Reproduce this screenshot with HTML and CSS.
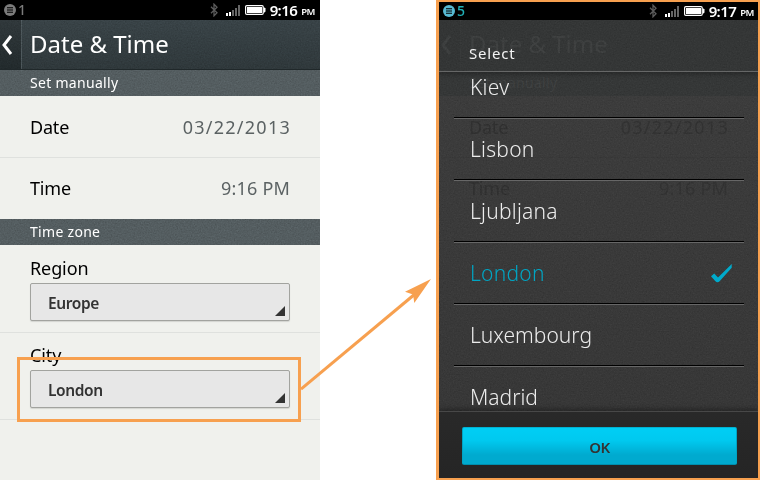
FILE: index.html
```
<!DOCTYPE html>
<html lang="en">
<head>
<meta charset="utf-8">
<title>Date &amp; Time</title>
<link rel="stylesheet" href="styles.css">
</head>
<body>
<svg class="defs" width="0" height="0">
  <defs>
    <filter id="grain" x="0" y="0" width="100%" height="100%" color-interpolation-filters="sRGB">
      <feTurbulence type="fractalNoise" baseFrequency="0.7" numOctaves="2" seed="4"/>
      <feColorMatrix values="0.33 0.33 0.33 0 0  0.33 0.33 0.33 0 0  0.33 0.33 0.33 0 0  0 0 0 0 1"/>
    </filter>
    <symbol id="notice" viewBox="0 0 12 12">
      <circle cx="6" cy="6" r="6" fill="currentColor"/>
      <path d="M3 3.7h6M3 6h6M3 8.3h6" stroke="#000" stroke-width="1.1"/>
    </symbol>
    <symbol id="bluetooth" viewBox="0 0 8 14">
      <path d="M1 3.8 7 9.7 4 12.8V1.2L7 4.3 1 10.2" fill="none" stroke="#5c5c5c" stroke-width="1.3"/>
    </symbol>
    <symbol id="signal" viewBox="0 0 14 11">
      <path d="M0 8h2v3H0zM3 7h2v4H3z" fill="#fff"/>
      <path d="M6 5h2v6H6zM9 3h2v8H9zM12 0h2v11h-2z" fill="#666"/>
    </symbol>
    <symbol id="battery" viewBox="0 0 21 10">
      <rect x=".6" y=".6" width="17.6" height="8.8" rx="1.2" fill="none" stroke="#fff" stroke-width="1.2"/>
      <rect x="2" y="2" width="15" height="6" fill="#fff"/>
      <path d="M18.5 2.5h1l1 1v3l-1 1h-1z" fill="#fff"/>
    </symbol>
  </defs>
</svg>

<main class="stage">
  <section class="phone">
    <header class="status">
      <svg class="notice"><use href="#notice"/></svg><span class="count">1</span>
      <svg class="bt"><use href="#bluetooth"/></svg>
      <svg class="sig"><use href="#signal"/></svg>
      <svg class="bat"><use href="#battery"/></svg>
      <span class="clock">9:16</span><span class="ampm">PM</span>
    </header>
    <div class="titlebar">
      <svg class="grain"><rect width="100%" height="100%" filter="url(#grain)"/></svg>
      <div class="back"><svg width="12" height="20" viewBox="0 0 12 20"><path d="M10 1 3 10l7 9" fill="none" stroke="#fff" stroke-width="3"/></svg></div>
      <h1>Date &amp; Time</h1>
    </div>
    <h2><svg class="grain"><rect width="100%" height="100%" filter="url(#grain)"/></svg><span>Set manually</span></h2>
    <div class="row"><span>Date</span><span class="value date">03/22/2013</span></div>
    <div class="row last"><span>Time</span><span class="value">9:16 PM</span></div>
    <h2 class="zone"><svg class="grain"><rect width="100%" height="100%" filter="url(#grain)"/></svg><span>Time zone</span></h2>
    <div class="field region"><span class="label">Region</span><div class="select">Europe</div></div>
    <div class="field"><span class="label">City</span><div class="select">London</div></div>
  </section>

  <section class="frame">
    <header class="status alt">
      <svg class="notice"><use href="#notice"/></svg><span class="count">5</span>
      <svg class="bt"><use href="#bluetooth"/></svg>
      <svg class="sig"><use href="#signal"/></svg>
      <svg class="bat"><use href="#battery"/></svg>
      <span class="clock">9:17</span><span class="ampm">PM</span>
    </header>
    <div class="dialog">
      <div class="under">
        <div class="titlebar">
          <div class="back"><svg width="12" height="20" viewBox="0 0 12 20"><path d="M10 1 3 10l7 9" fill="none" stroke="currentColor" stroke-width="3"/></svg></div>
          <h1>Date &amp; Time</h1>
        </div>
        <h2><span>Set manually</span></h2>
        <div class="row"><span>Date</span><span class="value date">03/22/2013</span></div>
        <div class="row last"><span>Time</span><span class="value">9:16 PM</span></div>
      </div>
      <svg class="grain"><rect width="100%" height="100%" filter="url(#grain)"/></svg>
      <div class="heading">Select</div>
      <ul class="list">
        <li class="kiev">Kiev</li>
        <li>Lisbon</li>
        <li>Ljubljana</li>
        <li class="on">London<svg width="22" height="20" viewBox="0 0 22 20"><path d="M0 12.2 3.2 9.6 7 13.4 20.7 0v3.8L8.6 17.3Q6.5 19.2 4.4 17.2Z" fill="#00aacb"/></svg></li>
        <li class="lux">Luxembourg</li>
        <li class="lux">Madrid</li>
      </ul>
      <div class="foot"><button>OK</button></div>
    </div>
  </section>

  <div class="callout"></div>
  <svg class="arrow" width="134" height="116" viewBox="0 0 134 116">
    <path d="M1 114.2 115 19" stroke="#f7a04f" stroke-width="3" fill="none"/>
    <path d="M131 4 105 16.7 113 19.5 114.3 28Z" fill="#f7a04f"/>
  </svg>
</main>
</body>
</html>
```
FILE: styles.css
```
* { box-sizing: border-box; }
body {
  margin: 0;
  background: #fff;
  font-family: "Noto Sans", "Open Sans", sans-serif;
}
.defs { position: absolute; }
.stage {
  position: relative;
  display: flex;
  justify-content: space-between;
  width: 760px;
  height: 480px;
  overflow: hidden;
}
.phone { width: 320px; height: 480px; background: #f0f1ed; }

.status {
  display: flex;
  align-items: center;
  height: 20px;
  padding: 0 5px 0 4px;
  background: #000;
  color: #fff;
}
.notice { width: 12px; height: 12px; color: #7b7b7b; }
.count { margin-left: 2px; font-size: 14px; font-weight: 500; line-height: 20px; color: #7b7b7b; }
.bt { width: 8px; height: 14px; margin-left: auto; }
.sig { width: 14px; height: 11px; margin-left: 8px; }
.bat { width: 21px; height: 10px; margin-left: 5px; }
.clock {
  margin-left: 4px;
  font-size: 15px;
  font-weight: 600;
  line-height: 18px;
  letter-spacing: -.6px;
}
.ampm { margin: 3px 0 0 4px; font-size: 9.5px; font-weight: 600; line-height: 17px; letter-spacing: -.4px; }

.grain {
  position: absolute;
  inset: 0;
  width: 100%;
  height: 100%;
  opacity: .25;
  mix-blend-mode: overlay;
}
.titlebar {
  position: relative;
  display: flex;
  height: 50px;
  background: linear-gradient(#394347, #2f383b);
  border-bottom: 1px solid #20282a;
  color: #fff;
}
.back {
  display: flex;
  align-items: center;
  width: 22px;
  padding-left: 1px;
  background: linear-gradient(#30383b, #222a2c);
  border-right: 1px solid #4c565a;
}
h1 {
  position: relative;
  margin: 0 0 0 8px;
  font-size: 24px;
  font-weight: 400;
  line-height: 48px;
}
h2 {
  position: relative;
  height: 26px;
  margin: 0;
  padding-left: 30px;
  background: #545d60;
  color: #fff;
  font-size: 14px;
  font-weight: 400;
  line-height: 26px;
  letter-spacing: .3px;
}
h2 span { position: relative; }
.row {
  display: flex;
  justify-content: space-between;
  height: 62px;
  padding: 0 30px;
  border-bottom: 1px solid #dfe1de;
  color: #000;
  font-size: 18px;
  line-height: 63px;
}
.row > span:first-child { letter-spacing: -.2px; }
.row.last { height: 61px; line-height: 61px; border: 0; }
.value { color: #5b6263; letter-spacing: .2px; }
.value.date { letter-spacing: 1.25px; margin-right: -1px; }
.field {
  height: 87px;
  padding: 10px 30px 0;
  border-bottom: 1px solid #dfe1de;
}
.field.region { height: 88px; padding-top: 11px; }
.field .label { display: block; height: 27px; font-size: 18px; line-height: 24px; letter-spacing: -.1px; }
.select {
  position: relative;
  height: 38px;
  padding-left: 17px;
  background: #e7e7e7;
  border: 1px solid #a2a39f;
  border-radius: 2px;
  box-shadow: 0 1px 1px #d3d4d0;
  color: #333;
  font-size: 15.5px;
  font-weight: 600;
  line-height: 39px;
  letter-spacing: -.4px;
}
.select::after {
  content: "";
  position: absolute;
  right: 4px;
  bottom: 4px;
  border-left: 10px solid transparent;
  border-bottom: 10px solid #333;
}

.frame {
  width: 324px;
  height: 480px;
  border: solid #f7a04f;
  border-width: 2px 2px 2px 3px;
  background: #353535;
}
.alt { height: 18px; padding-left: 4px; padding-right: 4px; }
.alt .notice { color: #57b9d2; }
.alt .count { color: #21b2b9; }
.dialog {
  position: relative;
  display: flex;
  flex-direction: column;
  height: 458px;
  overflow: hidden;
  background: linear-gradient(#3d3d3d, #363636);
}
.under { position: absolute; inset: 0; }
.under .titlebar { background: #343636; border: 0; color: #3e4040; }
.under .back { background: #333535; border-color: #363838; color: #3c3e3e; }
.under h2 { background: #353737; color: #3e4040; }
.under .row { color: #303030; border-color: #383838; }
.under .value { color: #323232; }
.heading {
  position: relative;
  height: 52px;
  padding-left: 30px;
  border-bottom: 1px solid #666767;
  box-shadow: 0 2px 5px rgba(0, 0, 0, .3);
  color: #f3f3f3;
  font-size: 15px;
  line-height: 67px;
  letter-spacing: .8px;
}
.list {
  position: relative;
  height: 339px;
  margin: 0;
  padding: 0 14px 0 15px;
  overflow: hidden;
  list-style: none;
}
li {
  display: flex;
  justify-content: space-between;
  align-items: center;
  height: 62px;
  padding: 0 11px 2px 16px;
  border-bottom: 1px solid #676767;
  box-shadow: inset 0 -1px #000;
  color: #ececec;
  font-size: 21px;
  font-weight: 300;
  letter-spacing: .25px;
}
.lux { letter-spacing: 0; }
.kiev { height: 47px; padding-bottom: 17px; }
.on { color: #00a5c3; }
.on svg { position: relative; top: 1px; }
.foot {
  position: relative;
  height: 67px;
  padding: 15px 21px 0 23px;
  border-top: 1px solid #484848;
  background: linear-gradient(#292929, #252525);
  box-shadow: 0 -2px 5px rgba(0, 0, 0, .35);
}
button {
  display: block;
  width: 100%;
  height: 38px;
  padding: 0;
  border: 1px solid #008fb0;
  border-color: #00b2d2 #00a4c4 #008fae;
  border-radius: 2px;
  background: linear-gradient(#00cef5, #00c9ef 35%, #00aacf 75%);
  color: #333;
  font: 600 15px/38px "Noto Sans", sans-serif;
  letter-spacing: -.5px;
}

.callout {
  position: absolute;
  left: 17px;
  top: 357px;
  width: 284px;
  height: 65px;
  border: 3px solid #f7a04f;
}
.arrow { position: absolute; left: 300px; top: 275px; }
```
